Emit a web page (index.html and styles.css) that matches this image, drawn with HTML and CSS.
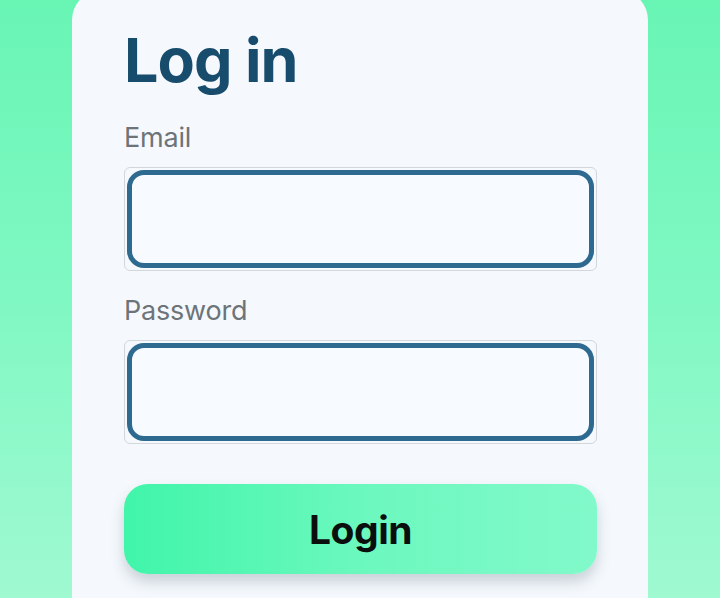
FILE: index.html
```html
<!DOCTYPE html>
<html lang="en">
<head>
<meta charset="utf-8">
<link rel="stylesheet" href="styles.css">
</head>
<body>
<main class="page">
  <section class="card">
    <h1 class="title">Log in</h1>
    <label class="label" for="email">Email</label>
    <div class="field"><input class="input" id="email" type="email"></div>
    <label class="label" for="password">Password</label>
    <div class="field"><input class="input" id="password" type="password"></div>
    <button class="btn" type="button">Login</button>
  </section>
</main>
</body>
</html>
```

FILE: styles.css
```css
html, body {
  margin: 0;
  padding: 0;
}
body {
  width: 720px;
  height: 598px;
  overflow: hidden;
  background: linear-gradient(180deg, #68f5b4 0%, #80f8c3 50%, #9ff9d1 100%);
  font-family: Inter, "Noto Sans", sans-serif;
}
.page {
  display: flex;
  justify-content: flex-start;
  padding-left: 72px;
}
.card {
  box-sizing: border-box;
  width: 576px;
  height: 608px;
  margin-top: -10px;
  background: #f5f9fd;
  border-radius: 30px 30px 0 0;
  padding: 30px 51px 0 52px;
  display: flex;
  flex-direction: column;
}
.title {
  margin: 0;
  font-size: 61px;
  line-height: 80px;
  font-weight: 700;
  color: #174c6c;
  letter-spacing: -1px;
}
.label {
  margin-top: 21px;
  font-size: 27px;
  line-height: 34px;
  color: #6d7479;
  letter-spacing: -0.2px;
}
.field {
  margin-top: 12px;
  box-sizing: border-box;
  width: 473px;
  height: 104px;
  border: 1px solid #d3d7db;
  border-radius: 6px;
  padding: 2px;
  display: flex;
}
.input {
  flex: 1;
  box-sizing: border-box;
  margin: 0;
  border: 5px solid #2e6a8f;
  border-radius: 17px;
  background: #f7fbff;
  outline: none;
}
.field + .label {
  margin-top: 23px;
}
.btn {
  margin-top: 40px;
  width: 473px;
  height: 90px;
  border: none;
  border-radius: 24px;
  background: linear-gradient(90deg, #40f5a9 0%, #6bf8be 50%, #82f9ca 100%);
  box-shadow: 0 8px 14px rgba(40, 70, 80, 0.22);
  font-family: Inter, "Noto Sans", sans-serif;
  font-size: 39px;
  font-weight: 700;
  color: #0a0f0d;
  letter-spacing: -0.5px;
}
```
